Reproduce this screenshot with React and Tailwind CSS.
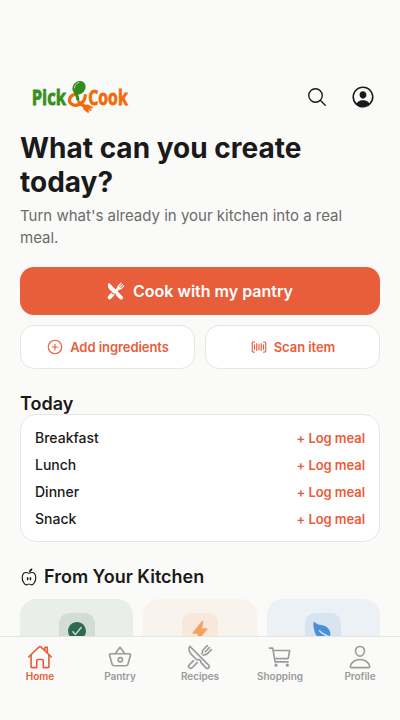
import clsx from 'clsx';
import {
  IoAddCircleOutline,
  IoBarcodeOutline,
  IoBasketOutline,
  IoCartOutline,
  IoCheckmarkCircle,
  IoFlash,
  IoHomeOutline,
  IoLeaf,
  IoNutritionOutline,
  IoPersonCircleOutline,
  IoPersonOutline,
  IoRestaurant,
  IoRestaurantOutline,
  IoSearchOutline,
} from 'react-icons/io5';

const MEALS = ['Breakfast', 'Lunch', 'Dinner', 'Snack'];

const KITCHEN_CARDS = [
  { id: 'ready', icon: IoCheckmarkCircle, card: 'bg-[#e9eeea]', tile: 'bg-[#d3ddd7]', color: 'text-[#2d6a4f]' },
  { id: 'quick', icon: IoFlash, card: 'bg-[#f9f3ed]', tile: 'bg-[#f9e7dc]', color: 'text-[#f4a261]' },
  { id: 'healthy', icon: IoLeaf, card: 'bg-[#ebf1f4]', tile: 'bg-[#d8e4f0]', color: 'text-[#4a90d9]' },
];

const TABS = [
  { label: 'Home', icon: IoHomeOutline, active: true },
  { label: 'Pantry', icon: IoBasketOutline },
  { label: 'Recipes', icon: IoRestaurantOutline },
  { label: 'Shopping', icon: IoCartOutline },
  { label: 'Profile', icon: IoPersonOutline },
];

const Logo = () => (
  <svg className="overflow-visible" width="98" height="36" viewBox="0 0 98 36" role="img" aria-label="Pick & Cook">
    <g fontFamily='"Open Sans", "Noto Sans", sans-serif' fontWeight="700" fontSize="20.500" strokeWidth="0.800">
      <text transform="translate(-0.300 26) scale(0.810 1)" fill="#3a8f1c" stroke="#3a8f1c">Pick</text>
      <text transform="translate(56.300 26) scale(0.770 1)" fill="#f26a0a" stroke="#f26a0a">Cook</text>
    </g>
    {/* Fork loop */}
    <path d="M42 15.500C37 17.500 36 22.500 39.500 25C43.500 28 52.500 25.500 53.300 16.500" fill="none" stroke="#f26a0a" strokeWidth="3.200" strokeLinecap="round" />
    <path d="M47 23.500L54 28.500" stroke="#f26a0a" strokeWidth="3.400" strokeLinecap="round" />
    <path d="M51.500 26L56 25.500L61 28.300L60.200 29.800L57 28.600L59.800 31L58.700 32.200L55.800 30.200L57.400 33L56 34L51.500 30.500Z" fill="#f26a0a" />
    {/* Spoon */}
    <ellipse cx="47" cy="8.700" rx="6.200" ry="7.200" transform="rotate(40 47 8.700)" fill="#318a1c" />
    <path d="M43.700 12.500L46 20.500" stroke="#318a1c" strokeWidth="3" strokeLinecap="round" />
    <path d="M42.500 9C42.500 6 44.500 4.200 47 3.600" fill="none" stroke="#b9dfa0" strokeWidth="1" strokeLinecap="round" />
  </svg>
);

const Header = () => (
  <header className="flex h-[50px] items-center justify-between pl-3 pr-1">
    <Logo />
    <div className="flex items-center gap-[22px]">
      <button aria-label="Search"><IoSearchOutline size={22} /></button>
      <button aria-label="Account"><IoPersonCircleOutline size={26} /></button>
    </div>
  </header>
);

const SecondaryButton = ({ icon: Icon, children }) => (
  <button className="flex h-11 flex-1 items-center justify-center gap-1.5 rounded-[14px] border border-[#e8e6e1] bg-white text-[13px] leading-4 font-semibold tracking-[-0.06px] text-[#e85d3a]">
    <Icon size={18} />
    {children}
  </button>
);

const MealLog = () => (
  <div className="flex h-32 flex-col rounded-2xl border border-[#e8e6e1] bg-white px-3.5 py-[9px]">
    {MEALS.map(meal => (
      <div key={meal} className="flex h-[27px] shrink-0 items-center justify-between">
        <span className="text-sm leading-[17px] font-medium">{meal}</span>
        <button className="text-[13px] leading-4 font-semibold tracking-[-0.06px] text-[#e85d3a]">+ Log meal</button>
      </div>
    ))}
  </div>
);

const KitchenCard = ({ item }) => {
  const Icon = item.icon;
  return (
    <div className={clsx('flex h-[120px] flex-1 justify-center rounded-2xl pt-3.5', item.card)}>
      <div className={clsx('flex size-9 items-center justify-center rounded-[10px]', item.tile, item.color)}>
        <Icon size={22} />
      </div>
    </div>
  );
};

const TabBar = () => (
  <nav className="flex h-[84px] shrink-0 border-t border-[#e8e6e1] bg-[#fafaf8] pt-[7px]">
    {TABS.map(({ label, icon: Icon, active }) => (
      <button
        key={label}
        className={clsx('flex flex-1 flex-col items-center', active ? 'text-[#e85d3a]' : 'text-[#9b9b9b]')}
      >
        <Icon size={26} />
        <span className="text-[10px] leading-[13px] font-semibold tracking-[-0.04px]">{label}</span>
      </button>
    ))}
  </nav>
);

export default function App() {
  return (
    <div className="flex h-[720px] w-[400px] flex-col overflow-hidden bg-[#fafaf8] font-['Inter',sans-serif] text-[#1a1a1a]">
      <main className="min-h-0 flex-1 overflow-hidden px-5 pt-[72px]">
        <Header />

        <h1 className="mt-[9px] text-[28px] leading-[34px] font-bold">What can you create today?</h1>
        <p className="mt-[6px] text-[15px] leading-[22px] text-[#6b6b6b]">
          Turn what's already in your kitchen into a real meal.
        </p>

        <button className="mt-[18px] flex h-12 w-full items-center justify-center gap-2 rounded-[14px] bg-[#e85d3a] text-base font-semibold text-white">
          <IoRestaurant size={18} />
          Cook with my pantry
        </button>
        <div className="mt-2.5 flex gap-2.5">
          <SecondaryButton icon={IoAddCircleOutline}>Add ingredients</SecondaryButton>
          <SecondaryButton icon={IoBarcodeOutline}>Scan item</SecondaryButton>
        </div>

        <h2 className="mt-6 text-lg leading-[21px] font-semibold">Today</h2>
        <MealLog />

        <h2 className="mt-6 flex items-center gap-1.5 text-lg leading-[22px] font-semibold">
          <IoNutritionOutline size={18} />
          From Your Kitchen
        </h2>
        <div className="mt-[11px] flex gap-2.5">
          {KITCHEN_CARDS.map(item => <KitchenCard key={item.id} item={item} />)}
        </div>
      </main>
      <TabBar />
    </div>
  );
}
